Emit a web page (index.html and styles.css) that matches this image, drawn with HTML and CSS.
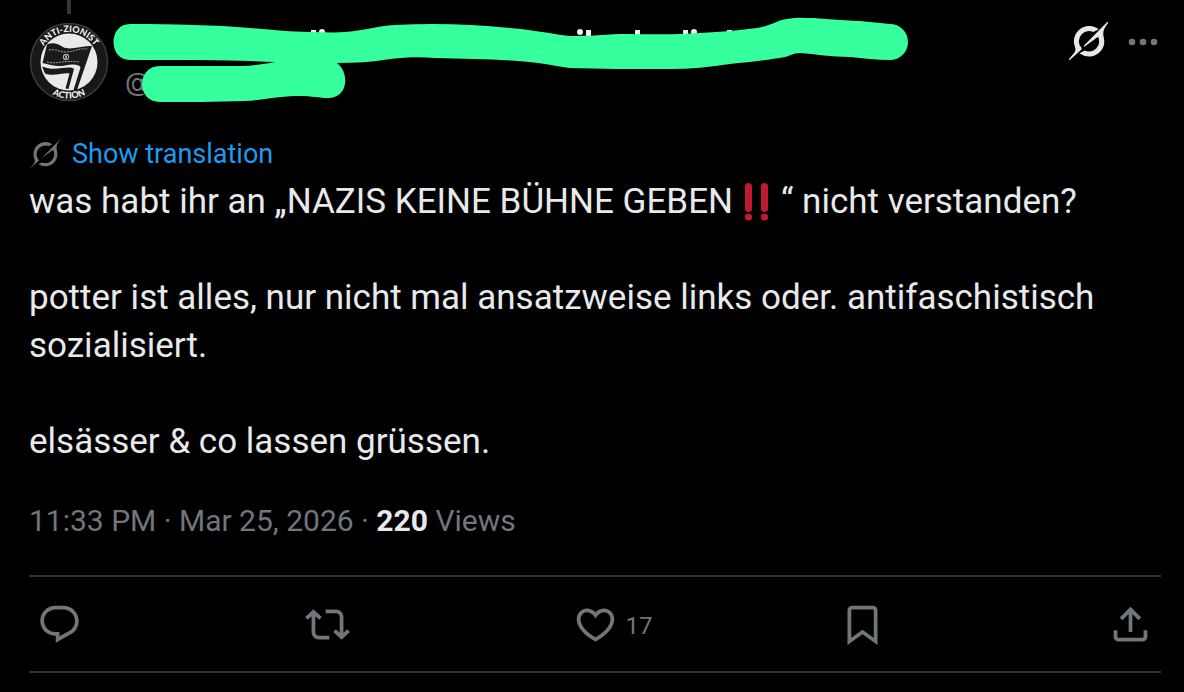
FILE: index.html
```
<!DOCTYPE html>
<html lang="en">
<head>
<meta charset="utf-8">
<meta name="viewport" content="width=device-width, initial-scale=1">
<title>Post</title>
<link rel="stylesheet" href="styles.css">
</head>
<body>
<svg class="defs" aria-hidden="true">
  <symbol id="grok" viewBox="0 0 33 32">
    <path d="M12.745 20.54l10.97-8.19c.539-.4 1.307-.244 1.564.38 1.349 3.288.746 7.241-1.938 9.955-2.683 2.714-6.417 3.31-9.83 1.954l-3.728 1.745c5.347 3.697 11.84 2.782 15.898-1.324 3.219-3.255 4.216-7.692 3.284-11.693l.008.009c-1.351-5.878.332-8.227 3.782-13.031L33 0l-4.54 4.59v-.014L12.743 20.544m-2.263 1.987c-3.837-3.707-3.175-9.446.1-12.755 2.42-2.449 6.388-3.448 9.852-1.979l3.72-1.737c-.67-.49-1.53-1.017-2.515-1.387-4.455-1.854-9.789-.931-13.41 2.728-3.483 3.523-4.579 8.94-2.697 13.561 1.405 3.454-.899 5.898-3.22 8.364C1.49 30.2.666 31.074 0 32l10.478-9.466"/>
  </symbol>
</svg>
<article class="post">
  <div class="thread"></div>
  <header class="head">
    <svg class="avatar" viewBox="0 0 80 80" role="img" aria-label="Profile picture">
      <defs>
        <path id="arc-top" d="M10 40a30 30 0 0 1 60 0"/>
        <path id="arc-bottom" d="M3.500 40a36.500 36.500 0 0 0 73 0"/>
      </defs>
      <circle cx="40" cy="40" r="38.500" fill="#181818" stroke="#3b3b3b" stroke-width="1.500"/>
      <circle cx="40" cy="40" r="28.500" fill="#e9e9e9"/>
      <path d="M18 22.500C24 20 29 22 34 25c8 4 19-2 29-1L48 68h-3.500l7-22.500C50 42 44 42 36 43.500 28 45 21 43 13.500 41z" fill="#1a1a1a"/>
      <path d="M13 44.500c8 3 14 2.500 20 1.500 6-.8 10-1 12 1L39.500 67l-3-.5 4-15c-8-1-15 3.500-24.500 0z" fill="#1a1a1a"/>
      <path d="M20 28c7-1.500 11 2.500 18 2 8-.5 12-4 21-3M18 40c9 2.500 17-2 33 0" fill="none" stroke="#9d9d9d" stroke-width="1" stroke-dasharray="2 1"/>
      <circle cx="37" cy="35" r="2.800" fill="none" stroke="#bbb"/>
      <path d="M35 37.500l4-5M36 33l2 4" stroke="#bbb"/>
      <text class="badge-text"><textPath href="#arc-top" startOffset="50%" text-anchor="middle">ANTI-ZIONIST</textPath></text>
      <text class="badge-text"><textPath href="#arc-bottom" startOffset="50%" text-anchor="middle">ACTION</textPath></text>
    </svg>
    <div class="author">
      <span class="handle">@</span>
      <svg class="marker" viewBox="111 15 800 90" aria-hidden="true">
        <g fill="#eee"><path d="M311 30h5v6h-5zM586 30h5v8h-5zM635 30h5v8h-5zM683 30h5v8h-5zM727 30h5v8h-5z"/><circle cx="322" cy="32" r="3"/><circle cx="580" cy="32" r="3"/><circle cx="694" cy="32" r="3"/></g>
        <path fill="#36ff9d" d="M130 24C175 24 215 25 250 28c25 2 38 4 60 4 12 0 24 1 35 0 22-2 31-6 50-7 38-2 76-1 115 3 24 2 42 6 60 8 18 0 32-1 50-2 30 0 55 1 80-1 22-1 40-3 57-5 14-2 20-8 30-9 10-2 18-1 27-1 12 1 26 2 46 3l30 3a18 18 0 0 1 0 36c-14 0-27-2-40-3-18 0-35-3-50-4-7 0-10 3-15 4-16 3-35 5-55 7-20 3-40 5-60 5-38 0-70 0-100-1-10-1-17-3-25-4-33-5-70-5-110-6-14-1-27-1-45 1-18 3-35 4-53 4 12 9 12 33-7 35-12 0-18-2-30-2-22 0-35 4-55 5-28 1-60 1-85 1-24 0-24-36 0-36h80c13 0 24-2 35-4-38-2-92-2-145-2-22 0-22-36 0-36z"/>
      </svg>
    </div>
    <button class="icon-btn grok-btn" aria-label="Grok actions"><svg><use href="#grok"/></svg></button>
    <button class="icon-btn more-btn" aria-label="More"><svg viewBox="0 0 30 8"><circle cx="4" cy="4" r="3.300"/><circle cx="15" cy="4" r="3.300"/><circle cx="26" cy="4" r="3.300"/></svg></button>
  </header>

  <div class="translate">
    <svg><use href="#grok"/></svg>
    <a href="#">Show translation</a>
  </div>

  <div class="body" lang="de">
    <p>was habt ihr an „NAZIS KEINE BÜHNE GEBEN<svg class="emoji" viewBox="0 0 40 40" role="img" aria-label="‼️"><g fill="#be1931"><rect x="8" y="1" width="7" height="29" rx="3.500"/><rect x="24" y="1" width="7" height="29" rx="3.500"/><circle cx="11.500" cy="35" r="3.600"/><circle cx="27.500" cy="35" r="3.600"/></g></svg>“ nicht verstanden?</p>
    <p>potter ist alles, nur nicht mal ansatzweise links oder. antifaschistisch sozialisiert.</p>
    <p>elsässer &amp; co lassen grüssen.</p>
  </div>

  <div class="meta"><time datetime="2026-03-25T23:33">11:33 PM · Mar 25, 2026</time> · <strong>220</strong> Views</div>

  <div class="actions">
    <button class="action" aria-label="Reply"><svg viewBox="0 0 24 24"><path d="M1.751 10c0-4.42 3.584-8 8.005-8h4.366c4.490 0 8.129 3.640 8.129 8.130 0 2.960-1.607 5.680-4.196 7.110l-8.054 4.460v-3.690h-.067c-4.490.1-8.183-3.510-8.183-8.010zm8.005-6c-3.317 0-6.005 2.690-6.005 6 0 3.370 2.770 6.080 6.138 6.010l.351-.01h1.761v2.300l5.087-2.810c1.951-1.080 3.163-3.130 3.163-5.360 0-3.390-2.744-6.130-6.129-6.130H9.756z"/></svg></button>
    <button class="action" aria-label="Repost"><svg viewBox="0 0 24 24"><path d="M4.500 3.880l4.432 4.140-1.364 1.460L5.500 7.550V16c0 1.100.896 2 2 2H13v2H7.500c-2.209 0-4-1.790-4-4V7.550L1.432 9.480.068 8.020 4.500 3.880zM16.500 6H11V4h5.500c2.209 0 4 1.790 4 4v8.450l2.068-1.930 1.364 1.460-4.432 4.140-4.432-4.140 1.364-1.460 2.068 1.930V8c0-1.100-.896-2-2-2z"/></svg></button>
    <button class="action" aria-label="17 likes"><svg viewBox="0 0 24 24"><path d="M16.697 5.500c-1.222-.06-2.679.51-3.890 2.160l-.805 1.090-.806-1.090C9.984 6.010 8.526 5.440 7.304 5.500c-1.243.07-2.349.78-2.910 1.910-.552 1.120-.633 2.780.479 4.820 1.074 1.970 3.257 4.270 7.129 6.610 3.870-2.340 6.052-4.640 7.126-6.610 1.111-2.040 1.030-3.700.477-4.820-.561-1.130-1.666-1.840-2.908-1.910zm4.187 7.690c-1.351 2.480-4.001 5.120-8.379 7.670l-.503.3-.504-.3c-4.379-2.550-7.029-5.190-8.382-7.670-1.360-2.500-1.410-4.860-.514-6.670.887-1.790 2.647-2.910 4.601-3.010 1.651-.09 3.368.56 4.798 2.010 1.429-1.450 3.146-2.100 4.796-2.010 1.954.1 3.714 1.220 4.601 3.010.896 1.810.846 4.170-.514 6.670z"/></svg><span>17</span></button>
    <button class="action" aria-label="Bookmark"><svg viewBox="0 0 24 24"><path d="M4 4.500C4 3.120 5.119 2 6.500 2h11C18.881 2 20 3.120 20 4.500v18.440l-8-5.710-8 5.710V4.500zM6.500 4c-.276 0-.5.220-.5.500v14.560l6-4.290 6 4.290V4.500c0-.28-.224-.5-.5-.5h-11z"/></svg></button>
    <button class="action" aria-label="Share"><svg viewBox="0 0 24 24"><path d="M12 2.590l5.700 5.700-1.410 1.420L13 6.410V16h-2V6.410l-3.300 3.300-1.410-1.420L12 2.590zM21 15l-.02 3.510c0 1.380-1.120 2.490-2.500 2.490H5.500C4.110 21 3 19.880 3 18.500V15h2v3.500c0 .28.220.5.500.5h12.980c.28 0 .5-.22.500-.5L19 15h2z"/></svg></button>
  </div>
</article>
</body>
</html>
```
FILE: styles.css
```
* {
  box-sizing: border-box;
}

body {
  margin: 0;
  background: #000;
  color: #e7e9ea;
  font-family: Roboto, "Liberation Sans", sans-serif;
}

svg {
  display: block;
  fill: currentColor;
}

button {
  padding: 0;
  border: 0;
  background: none;
  color: inherit;
  font: inherit;
  cursor: pointer;
}

.defs {
  display: none;
}

.post {
  padding: 0 23px 0 29px;
}

.thread {
  width: 4px;
  height: 14px;
  margin: 0 0 8px 38px;
  background: #333639;
}

.head {
  display: flex;
  align-items: flex-start;
  height: 80px;
}

.avatar {
  flex: none;
  width: 80px;
  height: 80px;
}

.badge-text {
  fill: #eee;
  font-family: Lato, sans-serif;
  font-size: 9px;
  font-weight: 900;
}

.author {
  position: relative;
  flex: 1;
  padding: 42px 0 0 16px;
}

.handle {
  color: #71767b;
  font-family: Inter, sans-serif;
  font-size: 26px;
  line-height: 36px;
}

.marker {
  position: absolute;
  top: -7px;
  left: 2px;
  width: 800px;
  height: 90px;
}

.grok-btn svg {
  width: 39px;
  height: 38px;
  stroke: currentColor;
  stroke-width: 1px;
}

.more-btn {
  margin: 16px 3px 0 20px;
  color: #71767b;
}

.more-btn svg {
  width: 30px;
  height: 8px;
}

.translate {
  display: flex;
  align-items: center;
  gap: 11px;
  margin-top: 28px;
  height: 48px;
  color: #71767b;
}

.translate svg {
  width: 32px;
  height: 32px;
}

.translate a {
  color: #1d9bf0;
  font-size: 27px;
  text-decoration: none;
}

.body {
  display: grid;
  gap: 48px;
  font-size: 35px;
  line-height: 48px;
}

.body p {
  margin: 0;
}

.emoji {
  display: inline-block;
  width: 40px;
  height: 40px;
  margin: 0 4px;
  vertical-align: -9px;
}

.meta {
  margin-top: 32px;
  color: #71767b;
  font-size: 30px;
  line-height: 45px;
}

.meta strong {
  color: #e7e9ea;
}

.actions {
  display: flex;
  align-items: center;
  height: 98px;
  margin-top: 32px;
  padding: 0 8px;
  border: solid #2f3336;
  border-width: 2px 0;
  color: #71767b;
}

.action {
  display: flex;
  flex: 1;
  align-items: center;
  gap: 8px;
  font-size: 24px;
}

.action span {
  padding-top: 4px;
}

.action:last-child {
  flex: none;
}

.action svg {
  width: 45px;
  height: 45px;
}
```
